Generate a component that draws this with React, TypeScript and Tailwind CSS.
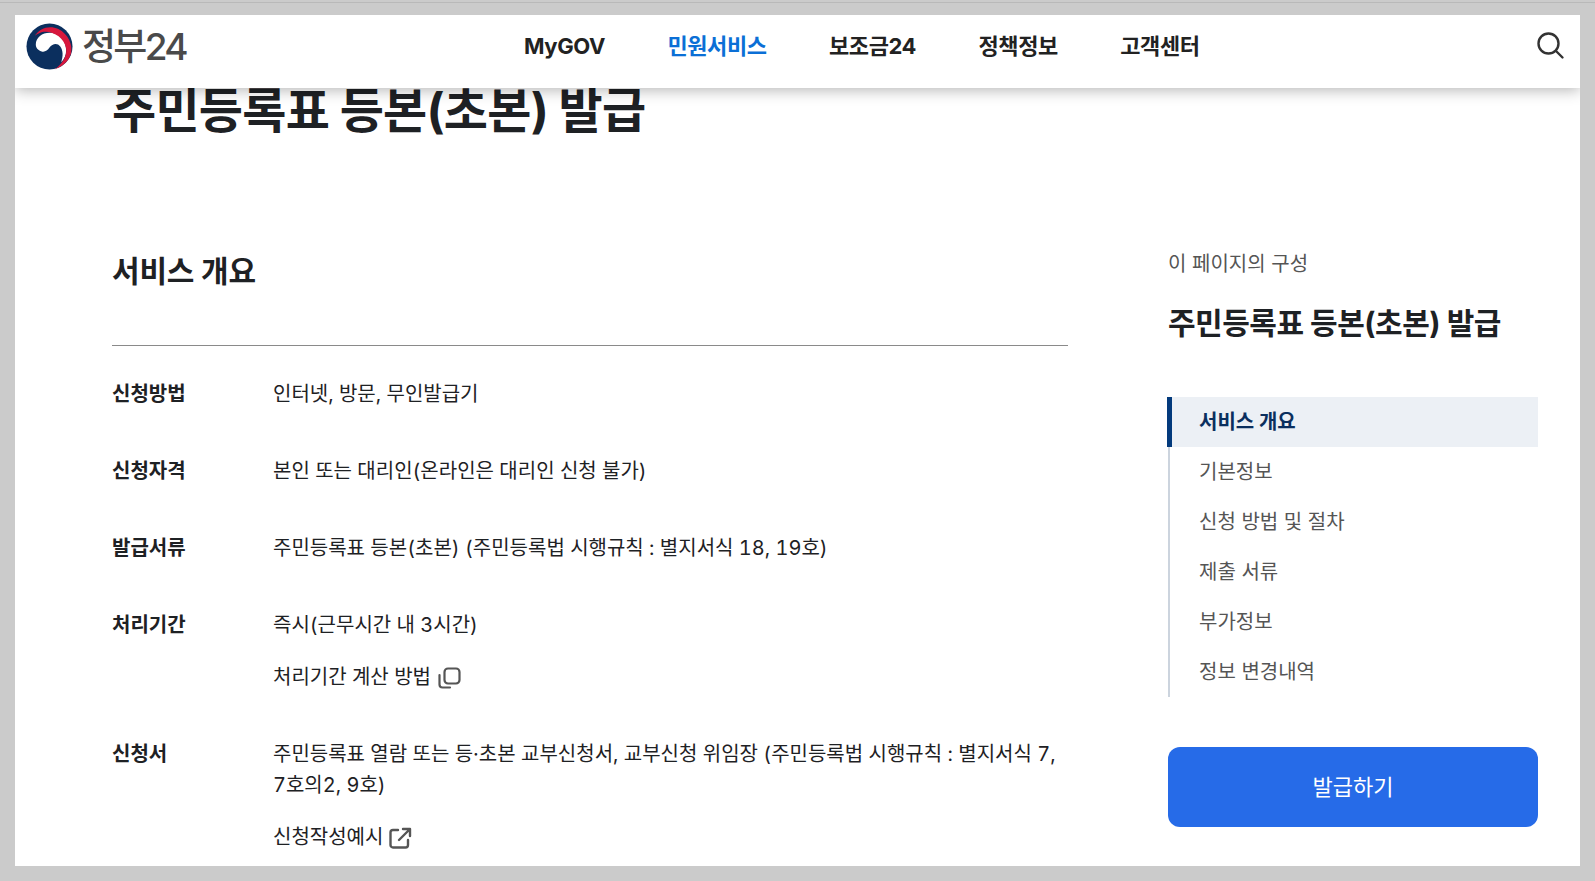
import React from "react";

const font = { fontFamily: 'Inter, "Noto Sans CJK KR", "Noto Sans", sans-serif' };

function Logo() {
  return (
    <svg width="47" height="47" viewBox="0 0 48 48" className="shrink-0">
      <circle cx="24" cy="24" r="23.5" fill="#0b2f5e" />
      <path d="M10 22C10 14 18 9 26 10C35 11 41 19 41 28C41 33 39 37 36 40C38 34 38 28 35 24C32 20 27 21 24 25C22 28 19 30 16 29C12 28 10 25 10 22Z" fill="#fff" />
      <path d="M9 13C14 5 24 2 33 6C43 11 48 22 46 31C44 39 37 45 29 47.5C37 42 42 34 41 26C39 15 28 8 18 9C15 9.500 12 11 9 13Z" fill="#d7173c" />
    </svg>
  );
}

function CopyIcon() {
  return (
    <svg width="24" height="24" viewBox="0 0 24 24" fill="none" stroke="#555" strokeWidth="2.200" className="ml-[6px]">
      <rect x="7.500" y="2.500" width="15" height="15" rx="3.500" />
      <path d="M2.500 9v9.500a3 3 0 0 0 3 3H13" strokeLinecap="round" />
    </svg>
  );
}

function ExternalIcon() {
  return (
    <svg width="24" height="24" viewBox="0 0 24 24" fill="none" stroke="#555" strokeWidth="2.400" className="ml-[5px]" strokeLinecap="round" strokeLinejoin="round">
      <path d="M10 4H5a2.500 2.500 0 0 0-2.500 2.500V19A2.500 2.500 0 0 0 5 21.500h12.500A2.500 2.500 0 0 0 20 19v-5" />
      <path d="M15 3h7v7M22 3 11 14" />
    </svg>
  );
}

function Row({ label, children, className }: { label: string; children: React.ReactNode; className?: string }) {
  return (
    <div className={"flex text-[20px] leading-[31px] tabular-nums text-[#1e2124] " + (className ?? "")}>
      <div className="w-[161px] shrink-0 font-bold">{label}</div>
      <div className="flex-1">{children}</div>
    </div>
  );
}

export default function App() {
  const nav = ["기본정보", "신청 방법 및 절차", "제출 서류", "부가정보", "정보 변경내역"];
  return (
    <div style={font} className="relative h-screen overflow-hidden bg-[#cbcbcb] px-[15px] pt-[15px] pb-[15px]">
      <div className="absolute left-0 right-0 top-[2px] h-px bg-[#b9b9b9]" />
      <div className="relative flex h-full flex-col overflow-hidden bg-white">
        <header className="relative z-10 flex h-[73px] shrink-0 items-start bg-white shadow-[0_2px_14px_rgba(0,0,0,0.3)]">
          <div className="ml-[11px] mt-[8px] flex items-center">
            <Logo />
            <span className="ml-[9px] text-[37px] font-medium leading-[44px] tracking-[-2.700px] text-[#4a4a4a]">정부24</span>
          </div>
          <nav className="absolute left-[509px] top-[16px] flex gap-[62.4px] text-[22px] font-bold leading-[30px] tracking-[-0.4px] text-[#222]">
            <span>MyGOV</span>
            <span className="text-[#0b6fd6]">민원서비스</span>
            <span>보조금24</span>
            <span>정책정보</span>
            <span>고객센터</span>
          </nav>
          <svg width="30" height="30" viewBox="0 0 30 30" fill="none" stroke="#333" strokeWidth="2.400" className="absolute right-[15px] top-[15px]" strokeLinecap="round">
            <circle cx="13.500" cy="13.500" r="10" />
            <path d="M21 21l6.500 6.500" />
          </svg>
        </header>

        <main className="flex-1 pl-[97px] pr-[98px]">
          <h1 className="mt-[-7px] text-[48px] font-bold leading-[60px] tracking-[-0.75px] text-[#1e2124]">주민등록표 등본(초본) 발급</h1>
          <div className="mt-[110px] flex">
            <section className="w-[956px] shrink-0">
              <h2 className="text-[30px] font-bold leading-[40px] tracking-[-0.2px] text-[#1e2124]">서비스 개요</h2>
              <div className="mt-[54px] border-t border-[#8a8a8a]" />
              <Row label="신청방법" className="mt-[33px]">인터넷, 방문, 무인발급기</Row>
              <Row label="신청자격" className="mt-[46px]">본인 또는 대리인(온라인은 대리인 신청 불가)</Row>
              <Row label="발급서류" className="mt-[46px]">주민등록표 등본(초본) (주민등록법 시행규칙 : 별지서식 18, 19호)</Row>
              <Row label="처리기간" className="mt-[46px]">
                <div>즉시(근무시간 내 3시간)</div>
                <div className="mt-[21px] flex items-center">처리기간 계산 방법<CopyIcon /></div>
              </Row>
              <Row label="신청서" className="mt-[46px]">
                <div>주민등록표 열람 또는 등·초본 교부신청서, 교부신청 위임장 (주민등록법 시행규칙 : 별지서식 7, 7호의2, 9호)</div>
                <div className="mt-[21px] flex items-center">신청작성예시<ExternalIcon /></div>
              </Row>
            </section>

            <aside className="ml-[100px] w-[370px] shrink-0">
              <div className="mt-[-2px] text-[20px] leading-[30px] text-[#555]">이 페이지의 구성</div>
              <div className="mt-[24px] text-[30px] font-bold leading-[40px] tracking-[-0.5px] text-[#1e2124]">주민등록표 등본(초본) 발급</div>
              <ul className="mt-[54px] border-l-2 border-[#ccd4de] text-[20px] text-[#555]">
                <li className="ml-[-3px] flex h-[50px] items-center border-l-[5px] border-[#033a7c] bg-[#ecf0f5] pl-[27px] font-bold text-[#0b2f5e]">서비스 개요</li>
                {nav.map((n) => (
                  <li key={n} className="flex h-[50px] items-center pl-[29px]">{n}</li>
                ))}
              </ul>
              <button className="mt-[50px] flex h-[80px] w-full items-center justify-center rounded-[12px] bg-[#266be8] text-[22px] text-white">발급하기</button>
            </aside>
          </div>
        </main>
      </div>
    </div>
  );
}
